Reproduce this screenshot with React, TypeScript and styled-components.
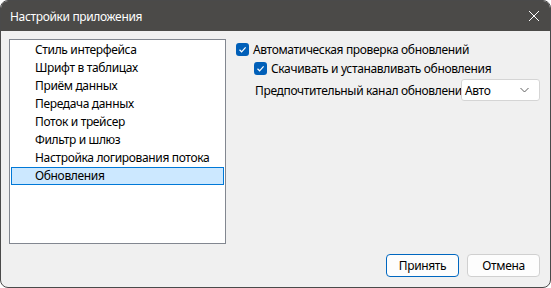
import styled, { createGlobalStyle } from "styled-components";

const GlobalStyle = createGlobalStyle`
  html, body {
    margin: 0;
    padding: 0;
    background: #ffffff;
  }
  * {
    box-sizing: border-box;
  }
`;

const Window = styled.div`
  width: 551px;
  height: 288px;
  display: flex;
  flex-direction: column;
  border: 1px solid #4a4a4a;
  border-radius: 8px;
  overflow: hidden;
  background: #f0f0f0;
  font-family: "Noto Sans", "Segoe UI", sans-serif;
  font-size: 12px;
  letter-spacing: -0.35px;
  color: #000;
`;

const TitleBar = styled.div`
  height: 30px;
  flex: none;
  display: flex;
  align-items: center;
  justify-content: space-between;
  padding: 0 10px 0 9px;
  background: #4b4a48;
  color: #ffffff;
  font-size: 12px;
`;

const CloseButton = styled.button`
  width: 12px;
  height: 12px;
  padding: 0;
  border: none;
  background: none;
  display: flex;
`;

const Body = styled.div`
  flex: 1;
  display: flex;
  flex-direction: column;
  padding: 8px 10px 10px 8px;
`;

const Content = styled.div`
  display: flex;
  gap: 10px;
`;

const ListBox = styled.ul`
  width: 218px;
  height: 205px;
  margin: 0;
  padding: 1px;
  list-style: none;
  background: #ffffff;
  border: 1px solid #828790;
`;

const ListItem = styled.li<{ $selected?: boolean }>`
  height: 18px;
  line-height: 16px;
  padding-left: 23px;
  border: 1px solid ${(p) => (p.$selected ? "#0078d7" : "transparent")};
  background: ${(p) => (p.$selected ? "#cce8ff" : "transparent")};
  white-space: nowrap;
`;

const Options = styled.div`
  flex: 1;
  display: flex;
  flex-direction: column;
  padding-top: 1px;
`;

const CheckRow = styled.label<{ $indent?: number }>`
  display: flex;
  align-items: center;
  gap: 4px;
  height: 19px;
  padding-left: ${(p) => p.$indent ?? 0}px;
`;

const Box = styled.span`
  width: 13px;
  height: 13px;
  border-radius: 3px;
  background: #005fb8;
  display: flex;
  align-items: center;
  justify-content: center;
`;

const ChannelRow = styled.div`
  display: flex;
  align-items: center;
  margin-top: 1px;
  padding-left: 19px;
`;

const ChannelLabel = styled.span`
  width: 206px;
  overflow: hidden;
  white-space: nowrap;
`;

const Combo = styled.div`
  width: 79px;
  height: 22px;
  display: flex;
  align-items: center;
  justify-content: space-between;
  padding: 0 10px 0 3px;
  background: #ffffff;
  border: 1px solid #d5d5d5;
  border-radius: 3px;
`;

const Footer = styled.div`
  margin-top: auto;
  display: flex;
  justify-content: flex-end;
  gap: 8px;
`;

const Button = styled.button<{ $primary?: boolean }>`
  width: 73px;
  height: 23px;
  padding: 0;
  font-family: inherit;
  font-size: 12px;
  letter-spacing: inherit;
  color: #000;
  background: #fdfdfd;
  border: 1px solid ${(p) => (p.$primary ? "#0067c0" : "#d0d0d0")};
  border-radius: 4px;
`;

const Check = () => (
  <Box>
    <svg width="9" height="9" viewBox="0 0 9 9">
      <path d="M1.5 4.8 L3.6 6.8 L7.6 2.3" fill="none" stroke="#fff" strokeWidth="1.2" />
    </svg>
  </Box>
);

const sections = [
  "Стиль интерфейса",
  "Шрифт в таблицах",
  "Приём данных",
  "Передача данных",
  "Поток и трейсер",
  "Фильтр и шлюз",
  "Настройка логирования потока",
  "Обновления",
];

export default function App() {
  return (
    <>
      <GlobalStyle />
      <Window>
        <TitleBar>
          <span>Настройки приложения</span>
          <CloseButton aria-label="Закрыть">
            <svg width="12" height="12" viewBox="0 0 12 12">
              <path d="M1 1 L11 11 M11 1 L1 11" stroke="#ffffff" strokeWidth="1" />
            </svg>
          </CloseButton>
        </TitleBar>
        <Body>
          <Content>
            <ListBox>
              {sections.map((s) => (
                <ListItem key={s} $selected={s === "Обновления"}>
                  {s}
                </ListItem>
              ))}
            </ListBox>
            <Options>
              <CheckRow>
                <Check />
                Автоматическая проверка обновлений
              </CheckRow>
              <CheckRow $indent={18}>
                <Check />
                Скачивать и устанавливать обновления
              </CheckRow>
              <ChannelRow>
                <ChannelLabel>Предпочтительный канал обновления</ChannelLabel>
                <Combo>
                  <span>Авто</span>
                  <svg width="9" height="6" viewBox="0 0 9 6">
                    <path d="M0.5 1 L4.5 5 L8.5 1" fill="none" stroke="#606060" strokeWidth="1" />
                  </svg>
                </Combo>
              </ChannelRow>
            </Options>
          </Content>
          <Footer>
            <Button $primary>Принять</Button>
            <Button>Отмена</Button>
          </Footer>
        </Body>
      </Window>
    </>
  );
}
